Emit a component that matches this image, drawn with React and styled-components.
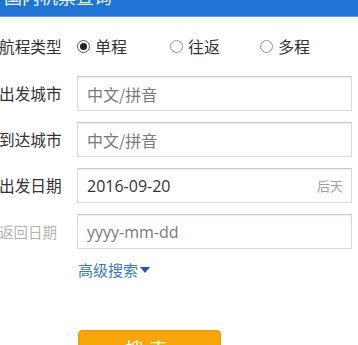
import React from "react";
import styled, { createGlobalStyle } from "styled-components";

const Global = createGlobalStyle`
  html, body { margin: 0; padding: 0; background: #fff; }
  body {
    font-family: "Microsoft YaHei", "Noto Sans CJK SC", "Noto Sans", sans-serif;
    width: 358px; height: 345px; overflow: hidden;
  }
`;

const Page = styled.div`
  width: 358px;
  height: 345px;
  overflow: hidden;
  display: flex;
  flex-direction: column;
`;

const Header = styled.div`
  height: 17px;
  flex: none;
  background: #1f74d6;
  border-bottom: 1px solid #5a9be6;
  overflow: hidden;
  padding-left: 4px;
  box-sizing: border-box;
`;

const HeaderTitle = styled.div`
  color: #eaf2ff;
  font-size: 18px;
  line-height: 18px;
  margin-top: -13px;
  white-space: nowrap;
`;

const Form = styled.div`
  display: flex;
  flex-direction: column;
  padding-top: 17px;
`;

const Row = styled.div`
  display: flex;
  align-items: center;
  height: ${(p) => p.$h || 35}px;
  margin-bottom: ${(p) => p.$mb ?? 11}px;
`;

const Label = styled.div`
  width: 78px;
  flex: none;
  color: ${(p) => (p.$muted ? "#b4b4b4" : "#333")};
  font-size: ${(p) => (p.$muted ? "14.5px" : "15.7px")};
  margin-left: -1px;
  white-space: nowrap;
`;

const RadioGroup = styled.div`
  display: flex;
  align-items: center;
`;

const RadioOption = styled.label`
  display: flex;
  align-items: center;
  width: ${(p) => p.$w}px;
  font-size: 16px;
  color: #333;
  gap: 5px;
`;

const Circle = styled.span`
  width: 11px;
  height: 11px;
  border-radius: 50%;
  border: 1px solid ${(p) => (p.$checked ? "#555" : "#999")};
  display: flex;
  align-items: center;
  justify-content: center;
  flex: none;
  &::after {
    content: "";
    display: ${(p) => (p.$checked ? "block" : "none")};
    width: 7px;
    height: 7px;
    border-radius: 50%;
    background: #222;
  }
`;

const InputBox = styled.div`
  width: 275px;
  height: 35px;
  box-sizing: border-box;
  border: 1px solid #d9d9d9;
  border-top-color: #c8c8c8;
  box-shadow: inset 0 1px 2px rgba(0, 0, 0, 0.08);
  display: flex;
  align-items: center;
  justify-content: space-between;
  padding: 0 8px 0 9px;
  background: #fff;
`;

const InputText = styled.span`
  font-size: 16px;
  color: ${(p) => (p.$filled ? "#333" : "#7a7a7a")};
  font-family: ${(p) => (p.$latin ? '"Open Sans", "Noto Sans", sans-serif' : "inherit")};
`;

const Hint = styled.span`
  font-size: 13px;
  color: #a0a0a0;
`;

const AdvLink = styled.a`
  margin-left: 78px;
  font-size: 15px;
  color: #3a78c3;
  display: flex;
  align-items: center;
  gap: 2px;
  cursor: pointer;
`;

const Caret = styled.span`
  width: 0;
  height: 0;
  border-left: 5px solid transparent;
  border-right: 5px solid transparent;
  border-top: 6px solid #1f5aa8;
  margin-top: 2px;
`;

const ButtonRow = styled.div`
  padding-left: 78px;
  margin-top: 51px;
`;

const SearchButton = styled.button`
  width: 143px;
  height: 40px;
  border: 1px solid #e99a05;
  border-radius: 4px;
  background: #f7a608;
  color: #fff;
  font-size: 18px;
  font-family: inherit;
  padding: 0;
  display: flex;
  justify-content: center;
  padding-top: 4px;
  letter-spacing: 6px;
`;

export default function App() {
  return (
    <Page>
      <Global />
      <Header>
        <HeaderTitle>国内机票查询</HeaderTitle>
      </Header>
      <Form>
        <Row $h={24} $mb={18}>
          <Label>航程类型</Label>
          <RadioGroup>
            <RadioOption $w={93}>
              <Circle $checked />
              单程
            </RadioOption>
            <RadioOption $w={90}>
              <Circle />
              往返
            </RadioOption>
            <RadioOption $w={90}>
              <Circle />
              多程
            </RadioOption>
          </RadioGroup>
        </Row>
        <Row>
          <Label>出发城市</Label>
          <InputBox>
            <InputText>中文/拼音</InputText>
          </InputBox>
        </Row>
        <Row>
          <Label>到达城市</Label>
          <InputBox>
            <InputText>中文/拼音</InputText>
          </InputBox>
        </Row>
        <Row>
          <Label>出发日期</Label>
          <InputBox>
            <InputText $filled $latin>2016-09-20</InputText>
            <Hint>后天</Hint>
          </InputBox>
        </Row>
        <Row $mb={10}>
          <Label $muted>返回日期</Label>
          <InputBox>
            <InputText $latin>yyyy-mm-dd</InputText>
          </InputBox>
        </Row>
        <Row $h={20} $mb={0}>
          <AdvLink>
            高级搜索
            <Caret />
          </AdvLink>
        </Row>
        <ButtonRow>
          <SearchButton>搜索</SearchButton>
        </ButtonRow>
      </Form>
    </Page>
  );
}
